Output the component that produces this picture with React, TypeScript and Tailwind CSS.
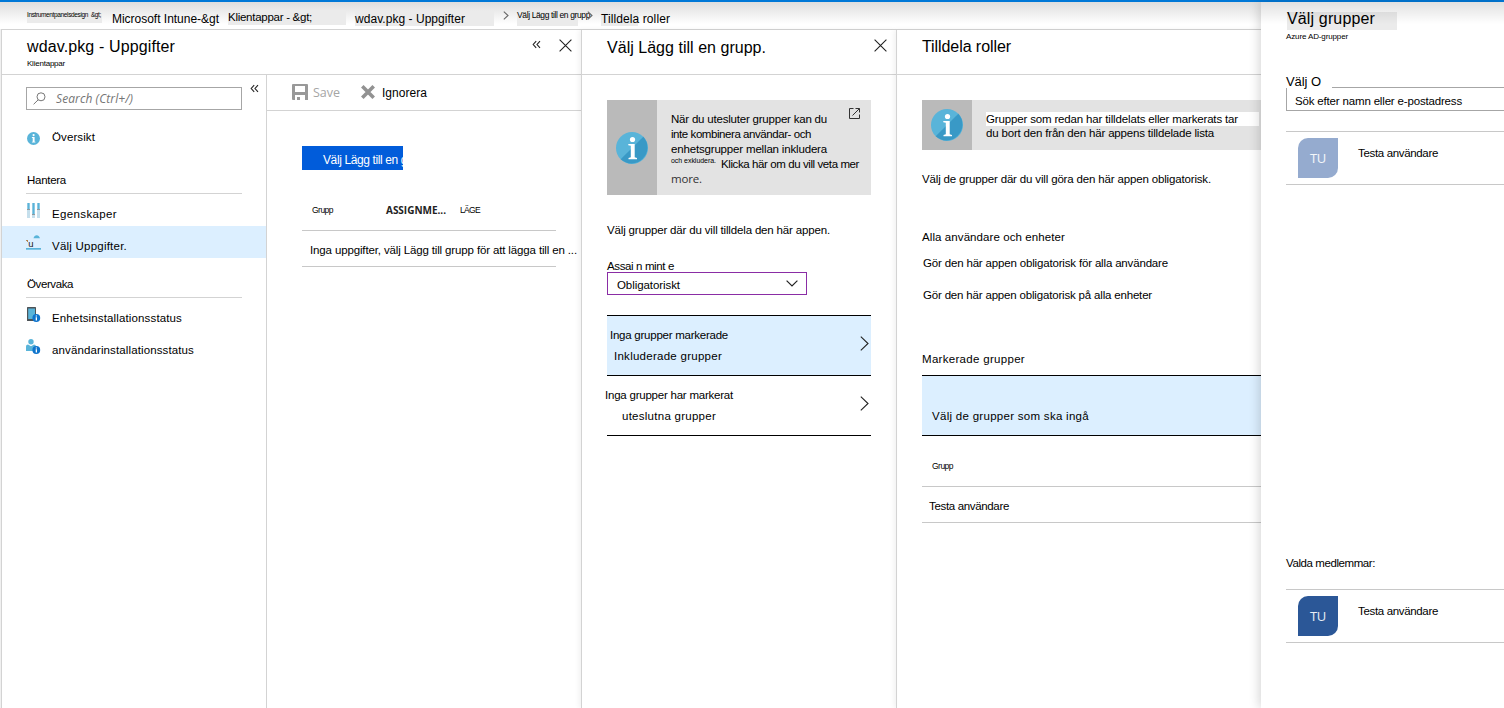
import { useLayoutEffect, useRef, useState } from "react";
import type { ReactNode } from "react";

type LabelProps = { w: number; className?: string; children: string };

/** Single-line label whose tracking is adjusted so that it spans `w` pixels. */
function Label({ w, className = "text-[11.5px] leading-5", children }: LabelProps) {
  const ref = useRef<HTMLSpanElement>(null);
  const [spacing, setSpacing] = useState(0);
  useLayoutEffect(() => {
    if (ref.current) {
      const natural = ref.current.getBoundingClientRect().width;
      setSpacing((w - natural) / children.length);
    }
  }, [w, children]);
  return (
    <span className={`block w-max shrink-0 whitespace-pre ${className}`}>
      <span ref={ref} style={{ letterSpacing: spacing }}>
        {children}
      </span>
    </span>
  );
}

function CloseIcon({ className = "" }: { className?: string }) {
  return (
    <svg className={`size-[13px] shrink-0 ${className}`} viewBox="0 0 13 13" fill="none" stroke="#222" strokeWidth="1.1">
      <path d="M.6 .6 12.4 12.4M12.4 .6 .6 12.4" />
    </svg>
  );
}

function CollapseIcon({ className = "" }: { className?: string }) {
  return (
    <svg className={`h-[9px] w-[9px] shrink-0 ${className}`} viewBox="0 0 9 9" fill="none" stroke="#222" strokeWidth="1.1">
      <path d="M4.2 1.2 1.2 4.5l3 3.3M8 1.2 5 4.5l3 3.3" />
    </svg>
  );
}

function ChevronRight({ className = "" }: { className?: string }) {
  return (
    <svg className={`h-[15px] w-[9px] shrink-0 ${className}`} viewBox="0 0 9 15" fill="none" stroke="#222" strokeWidth="1.1">
      <path d="M.8 .7 8 7.5 .8 14.3" />
    </svg>
  );
}

function CrumbChevron({ className = "" }: { className?: string }) {
  return (
    <svg className={`h-[9px] w-[6px] shrink-0 ${className}`} viewBox="0 0 6 9" fill="none" stroke="#666" strokeWidth="1.1">
      <path d="M.8 .6 5 4.5 .8 8.4" />
    </svg>
  );
}

function InfoDisc() {
  return (
    <svg className="size-8 shrink-0" viewBox="0 0 32 32">
      <circle cx="16" cy="16" r="16" fill="#59b4d9" />
      <path d="M27.3 4.7A16 16 0 0 1 4.7 27.3z" fill="#3999c6" />
      <circle cx="16.5" cy="7.5" r="2.6" fill="#fff" />
      <path d="M12.3 12h6.4v13.2l2.3.8v1.2h-8.500V26l2.300-.8V13.800l-2.500-.6z" fill="#fff" />
    </svg>
  );
}

function InfoSmall() {
  return (
    <svg className="mt-[14px] size-[14px] shrink-0" viewBox="0 0 14 14">
      <circle cx="7.500" cy="7.500" r="6.500" fill="#59b4d9" />
      <circle cx="7.600" cy="4.100" r="1.100" fill="#fff" />
      <path d="M5.900 6.100h2.700v4.600h.8v.9H5.900v-.9h.8V7h-.8z" fill="#fff" />
    </svg>
  );
}

function SlidersIcon() {
  return (
    <svg className="mt-[9px] h-[15px] w-[14px] shrink-0" viewBox="0 0 14 15">
      <path d="M1 0h3v15H1zM6 0h3v15H6zM11 0h3v15h-3z" fill="#c5dfec" />
      <path d="M1.500 0h2v6h-2zM6.500 0h2v11h-2zM11.500 0h2v6h-2z" fill="#59b4d9" />
      <path d="M1 6h3v1H1zM6 11h3v1H6zM11 6h3v1h-3z" fill="#8f9a9f" />
    </svg>
  );
}

function AssignIcon() {
  return (
    <svg className="mt-[9px] h-[15px] w-[15px] shrink-0" viewBox="0 0 15 15">
      <path d="M7.500 3.200C8 1.100 9.100.2 10.700.2s2.700.9 3.200 3z" fill="#59b4d9" />
      <path d="M0 13h15v1.700H0z" fill="#59b4d9" />
      <path d="M0 5.500h1.800M1.500 5v2" stroke="#b07b45" strokeWidth=".9" />
      <text x="2.200" y="12" fontSize="9.500" fontFamily="Liberation Sans" fill="#222">u</text>
    </svg>
  );
}

function Badge() {
  return (
    <g>
      <circle cx="10.300" cy="11" r="3.900" fill="#0f74cc" />
      <path d="M9.700 8.400h1.300v1.200H9.700zM9.700 10.200h1.300v3.200H9.700z" fill="#fff" />
    </g>
  );
}

function DeviceIcon() {
  return (
    <svg className="mt-[9px] h-[15px] w-[15px] shrink-0" viewBox="0 0 15 15">
      <rect x="1" y="0" width="9" height="14" rx=".5" fill="#4d5357" />
      <rect x="2.200" y="1.500" width="6.800" height="10.500" fill="#59b4d9" />
      <Badge />
    </svg>
  );
}

function UserIcon() {
  return (
    <svg className="mt-[9px] h-[15px] w-[15px] shrink-0" viewBox="0 0 15 15">
      <circle cx="5" cy="2.700" r="2.700" fill="#59b4d9" />
      <path d="M0 12V7.800c0-1.400.9-2.200 2-2.200l3 1.700 3-1.700c1.100 0 2 .8 2 2.200V12z" fill="#59b4d9" />
      <Badge />
    </svg>
  );
}

function BladeHeader({ children }: { children: ReactNode }) {
  return <div className="flex h-[45px] shrink-0 items-start border-b border-[#d3d3d3]">{children}</div>;
}

function Breadcrumb() {
  return (
    <nav className="flex h-[27px] shrink-0 items-start pl-[27px]">
      <div className="mt-[11px] h-[10px] w-[75px] bg-[#ebebeb]">
        <Label w={74} className="-mt-[3px] text-[6.5px] leading-[10px]">{"Instrumentpanelsdesign  &gt;"}</Label>
      </div>
      <Label w={107} className="ml-[10px] mt-[7px] text-xs leading-5">{"Microsoft Intune-&gt"}</Label>
      <div className="ml-[9px] mt-[8px] h-[15px] w-[118px] bg-[#ebebeb]">
        <Label w={84} className="-mt-[3px] text-[11.5px] leading-5">{"Klientappar - &gt;"}</Label>
      </div>
      <div className="ml-[9px] mt-[9px] h-[15px] w-[139px] bg-[#ebebeb]">
        <Label w={110} className="-mt-[2px] text-xs leading-5">wdav.pkg - Uppgifter</Label>
      </div>
      <CrumbChevron className="ml-[9px] mt-[9px]" />
      <div className="ml-[8px] mt-[10px] h-[14px] w-[61px] bg-[#ebebeb]">
        <Label w={73} className="-mt-[2px] text-[8.5px] leading-[10px]">Välj Lägg till en grupp</Label>
      </div>
      <CrumbChevron className="ml-[9px] mt-[9px]" />
      <div className="ml-[8px] mt-[10px] h-[14px] w-[37px] bg-[#ebebeb]">
        <Label w={69} className="-mt-[3px] text-xs leading-5">Tilldela roller</Label>
      </div>
    </nav>
  );
}

type NavItemProps = { icon: ReactNode; label: string; w: number; active?: boolean };

function NavItem({ icon, label, w, active }: NavItemProps) {
  return (
    <li className={active ? "flex h-8 items-start bg-[#dcefff] pl-6" : "flex h-8 items-start pl-6"}>
      <span className="w-[26px] shrink-0">{icon}</span>
      <Label w={w} className="mt-2 text-[11.5px] leading-6">{label}</Label>
    </li>
  );
}

function Sidebar() {
  return (
    <aside className="flex w-[265px] shrink-0 flex-col border-r border-[#d3d3d3]">
      <div className="flex items-start pl-6 pt-3">
        <div className="flex h-[23px] w-[216px] items-center border border-[#a6a6a6] pl-[6px]">
          <svg className="size-[13px]" viewBox="0 0 13 13" fill="none" stroke="#777" strokeWidth="1">
            <circle cx="8" cy="4.800" r="4" />
            <path d="M5.200 7.800.6 12.300" />
          </svg>
          <Label w={77} className="ml-[10px] font-['Open_Sans'] text-xs italic leading-5 text-[#757575]">Search (Ctrl+/)</Label>
        </div>
        <CollapseIcon className="ml-2 -mt-[3px]" />
      </div>
      <ul className="mt-[7px]">
        <NavItem icon={<InfoSmall />} label="Översikt" w={43} />
      </ul>
      <h3 className="ml-6 mt-[21px] h-6 w-[216px] border-b border-[#d3d3d3] pl-px">
        <Label w={39}>Hantera</Label>
      </h3>
      <ul>
        <NavItem icon={<SlidersIcon />} label="Egenskaper" w={65} />
        <NavItem icon={<AssignIcon />} label="Välj Uppgifter." w={75} active />
      </ul>
      <h3 className="ml-6 mt-4 h-6 w-[216px] border-b border-[#d3d3d3] pl-px">
        <Label w={46}>Övervaka</Label>
      </h3>
      <ul>
        <NavItem icon={<DeviceIcon />} label="Enhetsinstallationsstatus" w={130} />
        <NavItem icon={<UserIcon />} label="användarinstallationsstatus" w={142} />
      </ul>
    </aside>
  );
}

function AssignmentsBlade() {
  return (
    <section className="flex w-[580px] shrink-0 flex-col border-l border-[#d3d3d3]">
      <BladeHeader>
        <div className="pl-[25px] pt-[7px]">
          <Label w={148} className="text-base leading-5">wdav.pkg - Uppgifter</Label>
          <Label w={38} className="mt-[2px] text-[8px] leading-[10px]">Klientappar</Label>
        </div>
        <CollapseIcon className="ml-auto mt-[10px]" />
        <CloseIcon className="ml-[18px] mr-[9px] mt-[9px]" />
      </BladeHeader>
      <div className="flex flex-1">
        <Sidebar />
        <div className="flex min-w-0 flex-1 flex-col">
          <div className="flex h-9 items-start border-b border-[#d3d3d3] pl-[25px]">
            <svg className="mt-[9px] size-4" viewBox="0 0 16 16">
              <path d="M1 0h14a1 1 0 0 1 1 1v15h-3v-5H3v5H1a1 1 0 0 1-1-1V1a1 1 0 0 1 1-1z" fill="#999" />
              <path d="M3 2h10v6H3z" fill="#fff" />
              <path d="M5 13h3v3H5z" fill="#999" />
            </svg>
            <Label w={27} className="ml-[5px] mt-2 font-['Open_Sans'] text-[12.5px] leading-5 text-[#a5a5a5]">Save</Label>
            <svg className="ml-[21px] mt-[10px] size-[14px]" viewBox="0 0 14 14" stroke="#929292" strokeWidth="3.600">
              <path d="M1.300 1.300 12.700 12.700M12.700 1.300 1.300 12.700" />
            </svg>
            <Label w={45} className="ml-[7px] mt-2 text-xs leading-5">Ignorera</Label>
          </div>
          <button className="ml-[35px] mt-[35px] block h-6 w-[101px] overflow-hidden bg-[#015cda] pl-[21px] pt-1 text-left text-white">
            <Label w={84} className="text-xs leading-5">Välj Lägg till en g</Label>
          </button>
          <div className="ml-[35px] mt-[30px] flex h-[31px] w-[254px] items-start border-b border-[#c8c8c8] pl-[10px]">
            <Label w={21} className="text-[8.5px] leading-5">Grupp</Label>
            <Label w={60} className="ml-[53px] font-['Open_Sans'] text-[10px] font-bold leading-5 text-[#222]">ASSIGNME...</Label>
            <Label w={20} className="ml-[14px] text-[8.5px] leading-5">LÄGE</Label>
          </div>
          <div className="ml-[35px] flex h-9 w-[254px] items-start border-b border-[#c8c8c8] pl-2 pt-[9px]">
            <Label w={267}>Inga uppgifter, välj Lägg till grupp för att lägga till en ...</Label>
          </div>
        </div>
      </div>
    </section>
  );
}

function AddGroupBlade() {
  return (
    <section className="flex w-[315px] shrink-0 flex-col border-l border-[#d3d3d3] shadow-[-2px_0_5px_rgba(0,0,0,0.06)]">
      <BladeHeader>
        <Label w={159} className="ml-[25px] mt-[8px] text-base leading-5">Välj Lägg till en grupp.</Label>
        <CloseIcon className="ml-auto mr-[9px] mt-[9px]" />
      </BladeHeader>
      <div className="ml-[25px] mt-[25px] flex h-[95px] w-[264px] bg-[#e3e3e3]">
        <div className="flex w-[50px] items-center justify-center bg-[#bababa]">
          <InfoDisc />
        </div>
        <div className="relative flex-1 pl-[14px] pt-3">
          <Label w={156} className="text-[11.5px] leading-[15px]">När du utesluter grupper kan du</Label>
          <Label w={140} className="text-[11.5px] leading-[15px]">inte kombinera användar- och</Label>
          <Label w={156} className="text-[11.5px] leading-[15px]">enhetsgrupper mellan inkludera</Label>
          <div className="flex">
            <Label w={45} className="text-[7px] leading-[8px]">och exkludera.</Label>
            <Label w={138} className="ml-[5px] text-[11.5px] leading-[15px]">Klicka här om du vill veta mer</Label>
          </div>
          <Label w={31} className="-mt-px font-['Open_Sans'] text-[11.5px] leading-[15px] text-[#333]">more.</Label>
          <svg className="absolute right-[11px] top-2 size-[11px]" viewBox="0 0 11 11" fill="none" stroke="#333" strokeWidth="1">
            <path d="M4.500.5h-4v10h10v-4M6.500.5h4v4M10.300.7 3.500 7.500" />
          </svg>
        </div>
      </div>
      <div className="ml-[25px] mt-[25px] w-[264px]">
        <Label w={223}>Välj grupper där du vill tilldela den här appen.</Label>
        <Label w={67} className="mt-[17px] text-[11.5px] leading-[18px]">Assai n mint e</Label>
        <div className="-mt-[3px] flex h-[23px] w-[200px] items-center border border-[#8a2da5] pl-[9px] pr-2">
          <Label w={63} className="mt-[2px] text-[11.5px] leading-5">Obligatoriskt</Label>
          <svg className="ml-auto h-[7px] w-[12px]" viewBox="0 0 12 7" fill="none" stroke="#222" strokeWidth="1.200">
            <path d="M.6.6 6 6 11.400.6" />
          </svg>
        </div>
        <div className="mt-5 flex h-[61px] border-y border-black bg-[#dcefff]">
          <div className="pt-[9px]">
            <Label w={118} className="ml-[3px] text-[11.5px] leading-5">Inga grupper markerade</Label>
            <Label w={108} className="ml-[7px] mt-px text-[11.5px] leading-5">Inkluderade grupper</Label>
          </div>
          <ChevronRight className="ml-auto mr-[2px] mt-5" />
        </div>
        <div className="flex h-[60px] border-b border-black">
          <div className="-ml-[2px] pt-[9px]">
            <Label w={128}>Inga grupper har markerat</Label>
            <Label w={94} className="ml-[17px] mt-px text-[11.5px] leading-5">uteslutna grupper</Label>
          </div>
          <ChevronRight className="ml-auto mr-[2px] mt-5" />
        </div>
      </div>
    </section>
  );
}

function AssignRolesBlade() {
  return (
    <section className="flex w-[365px] shrink-0 flex-col border-l border-[#d3d3d3] shadow-[-2px_0_5px_rgba(0,0,0,0.06)]">
      <BladeHeader>
        <Label w={89} className="ml-[25px] mt-[7px] text-base leading-5">Tilldela roller</Label>
      </BladeHeader>
      <div className="ml-[25px] mt-[25px] flex h-[50px] bg-[#e3e3e3]">
        <div className="flex w-[50px] items-center justify-center bg-[#bababa]">
          <InfoDisc />
        </div>
        <div className="ml-[14px] mt-[13px] w-[273px]">
          <div className="h-[14px] bg-white">
            <Label w={252} className="-mt-px text-[11.5px] leading-[15px]">Grupper som redan har tilldelats eller markerats tar</Label>
          </div>
          <Label w={228} className="text-[11.5px] leading-[15px]">du bort den från den här appens tilldelade lista</Label>
        </div>
      </div>
      <div className="ml-[25px] mt-[19px]">
        <Label w={289}>Välj de grupper där du vill göra den här appen obligatorisk.</Label>
        <Label w={143} className="mt-[38px] text-[11.5px] leading-5">Alla användare och enheter</Label>
        <Label w={245} className="ml-px mt-[6px] text-[11.5px] leading-5">Gör den här appen obligatorisk för alla användare</Label>
        <Label w={229} className="ml-px mt-3 text-[11.5px] leading-5">Gör den här appen obligatorisk på alla enheter</Label>
        <Label w={103} className="mt-11 text-[11.5px] leading-5">Markerade grupper</Label>
        <div className="mt-[6px] h-[61px] border-y border-black bg-[#dcefff] pl-[10px] pt-[30px]">
          <Label w={157} className="text-[11.5px] leading-5">Välj de grupper som ska ingå</Label>
        </div>
        <div className="h-[51px] border-b border-[#c8c8c8] pl-[10px] pt-5">
          <Label w={21} className="text-[8.5px] leading-5">Grupp</Label>
        </div>
        <div className="h-9 border-b border-[#c8c8c8] pl-[7px] pt-[9px]">
          <Label w={80}>Testa användare</Label>
        </div>
      </div>
    </section>
  );
}

function Member({ tone }: { tone: string }) {
  return (
    <div className="flex h-[54px] items-start border-y border-[#c8c8c8] pl-3 pt-[6px]">
      <div className={`flex size-10 items-center justify-center rounded-br-[10px] rounded-tl-[10px] ${tone}`}>
        <Label w={16} className="font-['Open_Sans'] text-[13px] leading-5 text-white/90">TU</Label>
      </div>
      <Label w={80} className="ml-5 mt-[5px] text-[11.5px] leading-5">Testa användare</Label>
    </div>
  );
}

function GroupPicker() {
  return (
    <aside className="relative flex w-[243px] shrink-0 flex-col bg-white pl-[25px] shadow-[-2px_0_10px_rgba(0,0,0,0.16)]">
      <div className="ml-px mt-[10px] h-[18px] w-[110px] bg-[#ebebeb]">
        <Label w={88} className="-mt-[3px] text-base leading-5">Välj grupper</Label>
      </div>
      <Label w={62} className="mt-[2px] text-[8px] leading-[10px]">Azure AD-grupper</Label>
      <div className="mt-[30px] flex h-4 items-end">
        <Label w={35} className="-mb-[4px] text-[13px] leading-5">Välj O</Label>
        <div className="ml-[11px] flex-1 border-t border-[#a6a6a6]" />
      </div>
      <div className="h-[23px] border-b border-l border-[#a6a6a6] pl-2">
        <Label w={167} className="mt-[3px] text-[11.5px] leading-5">Sök efter namn eller e-postadress</Label>
      </div>
      <div className="mt-5">
        <Member tone="bg-[#95abcf]" />
      </div>
      <Label w={89} className="mt-[368px] text-[11.5px] leading-5">Valda medlemmar:</Label>
      <div className="mt-4">
        <Member tone="bg-[#2b5797]" />
      </div>
    </aside>
  );
}

export default function App() {
  return (
    <div className="relative flex h-[708px] w-[1504px] flex-col overflow-hidden bg-white font-['Liberation_Sans',sans-serif] text-black">
      <div className="h-[2px] shrink-0 bg-[#0078d7]" />
      <div className="flex min-h-0 flex-1">
        <main className="flex w-[1261px] shrink-0 flex-col bg-linear-to-b from-[#dedede] to-white to-[22px]">
          <Breadcrumb />
          <div className="flex min-h-0 flex-1 bg-[#f0f0f0] pl-px">
            <div className="flex flex-1 border-t border-[#d3d3d3] bg-white">
              <AssignmentsBlade />
              <AddGroupBlade />
              <AssignRolesBlade />
            </div>
          </div>
        </main>
        <GroupPicker />
      </div>
      <div className="pointer-events-none absolute right-0 top-[2px] h-[22px] w-[243px] bg-linear-to-b from-black/12 to-transparent" />
    </div>
  );
}
